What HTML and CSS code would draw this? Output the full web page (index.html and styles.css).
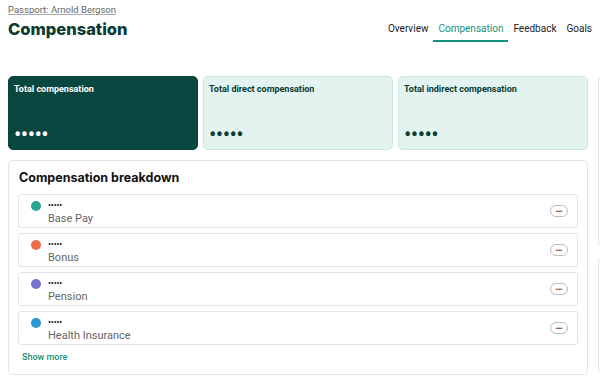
FILE: index.html
```html
<!DOCTYPE html>
<html lang="en">
<head>
    <meta charset="UTF-8">
    <meta name="viewport" content="width=device-width, initial-scale=1.0">
    <title>Compensation</title>
    <link rel="stylesheet" href="styles.css">
</head>
<body>
    <div class="page">
        <main class="main">
            <header class="header">
                <div class="title-block">
                    <a class="crumb" href="#">Passport: Arnold Bergson</a>
                    <h1>Compensation</h1>
                </div>
                <nav class="tabs">
                    <a class="tab" href="#">Overview</a>
                    <a class="tab active" href="#">Compensation</a>
                    <a class="tab" href="#">Feedback</a>
                    <a class="tab" href="#">Goals</a>
                </nav>
            </header>

            <!-- Totals -->
            <section class="totals">
                <div class="total-card dark">
                    <div class="total-title">Total compensation</div>
                    <div class="total-value">•••••</div>
                </div>
                <div class="total-card">
                    <div class="total-title">Total direct compensation</div>
                    <div class="total-value">•••••</div>
                </div>
                <div class="total-card">
                    <div class="total-title">Total indirect compensation</div>
                    <div class="total-value">•••••</div>
                </div>
            </section>

            <!-- Breakdown -->
            <section class="panel">
                <h2>Compensation breakdown</h2>
                <div class="rows">
                    <div class="row">
                        <span class="dot teal"></span>
                        <div class="row-text">
                            <div class="row-value">•••••</div>
                            <div class="row-label">Base Pay</div>
                        </div>
                        <button class="more">•••</button>
                    </div>
                    <div class="row">
                        <span class="dot orange"></span>
                        <div class="row-text">
                            <div class="row-value">•••••</div>
                            <div class="row-label">Bonus</div>
                        </div>
                        <button class="more">•••</button>
                    </div>
                    <div class="row">
                        <span class="dot purple"></span>
                        <div class="row-text">
                            <div class="row-value">•••••</div>
                            <div class="row-label">Pension</div>
                        </div>
                        <button class="more">•••</button>
                    </div>
                    <div class="row">
                        <span class="dot blue"></span>
                        <div class="row-text">
                            <div class="row-value">•••••</div>
                            <div class="row-label">Health Insurance</div>
                        </div>
                        <button class="more">•••</button>
                    </div>
                </div>
                <a class="show-more" href="#">Show more</a>
            </section>
        </main>

        <aside class="side">
            <div class="side-card"></div>
            <div class="side-card short"></div>
        </aside>
    </div>
</body>
</html>
```

FILE: styles.css
```css
body {
    margin: 0;
    font-family: Roboto, "Liberation Sans", sans-serif;
    color: #222;
    background: #fff;
    overflow: hidden;
}
.page {
    display: flex;
    gap: 10px;
    width: 600px;
    height: 380px;
    box-sizing: border-box;
    padding: 0 0 0 8px;
    overflow: hidden;
}
.main {
    width: 580px;
    flex-shrink: 0;
}
.header {
    display: flex;
    justify-content: space-between;
    align-items: flex-start;
    height: 76px;
}
.title-block {
    display: flex;
    flex-direction: column;
    align-items: flex-start;
    padding-top: 4px;
}
.crumb {
    font-size: 9.5px;
    line-height: 12px;
    color: #666;
    text-decoration: underline;
    text-decoration-color: #aaa;
}
h1 {
    margin: 3px 0 0;
    font-family: Inter, sans-serif;
    font-weight: 800;
    font-size: 16.5px;
    line-height: 20px;
    color: #0b3b33;
}
.tabs {
    display: flex;
    margin-top: 21px;
    margin-right: -9px;
}
.tab {
    font-size: 10px;
    color: #222;
    text-decoration: none;
    padding: 2px 5px 6px;
    border-bottom: 2px solid transparent;
}
.tab.active {
    color: #14917d;
    border-bottom-color: #14917d;
}
.totals {
    display: grid;
    grid-template-columns: repeat(3, 1fr);
    gap: 5px;
}
.total-card {
    height: 74px;
    box-sizing: border-box;
    padding: 7px 5px 10px;
    border-radius: 5px;
    background: #e2f3f0;
    border: 1px solid #c7e7e1;
    color: #0b3b33;
    display: flex;
    flex-direction: column;
    justify-content: space-between;
}
.total-card.dark {
    background: #0a4640;
    border-color: #0a4640;
    color: #fff;
}
.total-title {
    font-size: 9px;
    font-weight: 700;
}
.total-value {
    font-size: 22px;
    letter-spacing: -0.6px;
    line-height: 8px;
}
.panel {
    margin-top: 10px;
    border: 1px solid #e4e4e4;
    border-radius: 5px;
    padding: 9px 9px 10px;
    height: 215px;
    box-sizing: border-box;
}
h2 {
    margin: 0 0 9px 1px;
    font-family: Inter, sans-serif;
    font-weight: 700;
    font-size: 12.5px;
    color: #111;
}
.rows {
    display: flex;
    flex-direction: column;
    gap: 5px;
}
.row {
    display: flex;
    align-items: flex-start;
    height: 34px;
    box-sizing: border-box;
    border: 1px solid #e4e4e4;
    border-radius: 3px;
    padding: 5px 9px 0 12px;
}
.dot {
    width: 10px;
    height: 10px;
    border-radius: 50%;
    margin-top: 1px;
    margin-right: 7px;
}
.teal { background: #2aa697; }
.orange { background: #ef6a4b; }
.purple { background: #7a72d0; }
.blue { background: #2d96d7; }
.row-text {
    flex: 1;
}
.row-value {
    margin-top: 1px;
    font-size: 9px;
    line-height: 9px;
    color: #111;
    letter-spacing: -0.2px;
}
.row-label {
    font-size: 11px;
    color: #666;
    margin-top: 2px;
}
.more {
    margin-top: 5px;
    width: 18px;
    height: 12px;
    padding: 0;
    border: 1px solid #bbb;
    border-radius: 7px;
    background: #fff;
    font-size: 6px;
    line-height: 10px;
    letter-spacing: 0;
    color: #333;
}
.show-more {
    display: inline-block;
    margin: 6px 0 0 4px;
    font-size: 9px;
    font-weight: 500;
    color: #14917d;
    text-decoration: none;
}
.side {
    flex: 1;
    display: flex;
    flex-direction: column;
    gap: 14px;
    padding-top: 78px;
    min-width: 0;
}
.side-card {
    height: 165px;
    flex-shrink: 0;
    border: 1px solid #e4e4e4;
    border-right: none;
    border-radius: 5px 0 0 5px;
}
.side-card.short {
    height: 110px;
}
```
